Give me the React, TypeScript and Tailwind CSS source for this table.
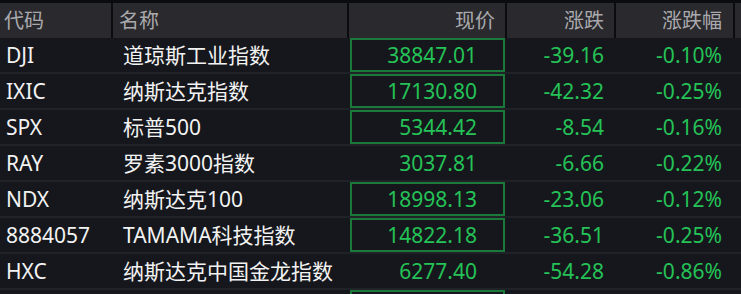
import React from "react";

const rows = [
  { code: "DJI", name: "道琼斯工业指数", price: "38847.01", chg: "-39.16", pct: "-0.10%", boxed: true },
  { code: "IXIC", name: "纳斯达克指数", price: "17130.80", chg: "-42.32", pct: "-0.25%", boxed: true },
  { code: "SPX", name: "标普500", price: "5344.42", chg: "-8.54", pct: "-0.16%", boxed: true },
  { code: "RAY", name: "罗素3000指数", price: "3037.81", chg: "-6.66", pct: "-0.22%", boxed: false },
  { code: "NDX", name: "纳斯达克100", price: "18998.13", chg: "-23.06", pct: "-0.12%", boxed: true },
  { code: "8884057", name: "TAMAMA科技指数", price: "14822.18", chg: "-36.51", pct: "-0.25%", boxed: true },
  { code: "HXC", name: "纳斯达克中国金龙指数", price: "6277.40", chg: "-54.28", pct: "-0.86%", boxed: false },
  { code: "", name: "", price: "", chg: "", pct: "", boxed: true },
];

const font = { fontFamily: '"Noto Sans", "Noto Sans CJK SC", sans-serif' };

export default function App() {
  return (
    <div className="w-[741px] h-[294px] overflow-hidden bg-[#15171c]" style={font}>
      <div className="h-[3px] bg-[#0b0c0e]" />

      {/* header */}
      <div className="flex h-[35px] bg-[#2a292e] text-[20px] text-[#a9a9ad] leading-none">
        <div className="w-[113px] flex items-center pl-[4px] border-r-2 border-[#0c0c0e]">代码</div>
        <div className="w-[236px] flex items-center pl-[6px] border-r-2 border-[#0c0c0e]">名称</div>
        <div className="w-[158px] flex items-center justify-end pr-[10px] border-r-2 border-[#0c0c0e]">现价</div>
        <div className="w-[109px] flex items-center justify-end pr-[10px] border-r-2 border-[#0c0c0e]">涨跌</div>
        <div className="w-[119px] flex items-center justify-end pr-[11px] border-r-2 border-[#0c0c0e]">涨跌幅</div>
        <div className="flex-1" />
      </div>

      {rows.map((r, i) => (
        <div key={i} className="flex h-[36px] border-b-2 border-[#1f2227] text-[21px] leading-none">
          <div className="w-[113px] flex items-center pl-[6px] text-[#f2f2f2]">{r.code}</div>
          <div className="w-[236px] flex items-center pl-[10px] text-[#f2f2f2]">{r.name}</div>
          <div className="w-[158px] pl-[1px] pr-[2px]">
            <div
              className={`h-full flex items-center justify-end pr-[26px] text-[#25c257] border-2 ${
                r.boxed ? "border-[#1b7a3b]" : "border-transparent"
              }`}
            >
              {r.price}
            </div>
          </div>
          <div className="w-[109px] flex items-center justify-end pr-[12px] text-[#25c257]">{r.chg}</div>
          <div className="w-[119px] flex items-center justify-end pr-[13px] text-[#25c257]">{r.pct}</div>
          <div className="flex-1" />
        </div>
      ))}
    </div>
  );
}
